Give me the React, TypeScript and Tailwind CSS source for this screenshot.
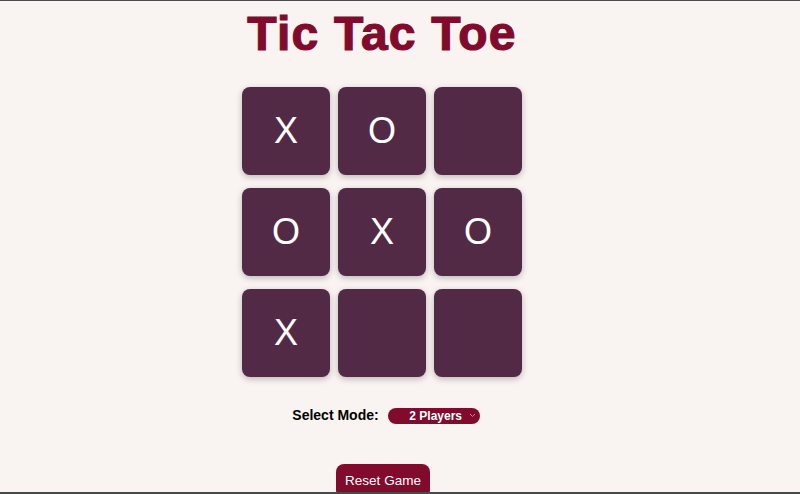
import React from "react";

const board = ["X", "O", "", "O", "X", "O", "X", "", ""];

export default function App() {
  return (
    <div
      className="h-[494px] w-[800px] overflow-hidden bg-[#f9f4f2] border-t border-b-2 border-[#4a4a4a] box-border"
      style={{ fontFamily: '"Liberation Sans", Arial, sans-serif' }}
    >
      <div className="w-[764px] flex flex-col items-center">
        <h1 className="mt-[9px] text-[48px] leading-[48px] font-bold tracking-[1.2px] text-[#810b2c] [-webkit-text-stroke:1.2px_#810b2c]">
          Tic Tac Toe
        </h1>
        <div className="mt-[29px] grid grid-cols-[88px_88px_88px] gap-x-2 gap-y-[13px]">
          {board.map((v, i) => (
            <div
              key={i}
              className="w-[88px] h-[88px] rounded-lg bg-[#532a45] shadow-[0_2px_6px_rgba(0,0,0,0.25)] flex items-center justify-center text-white text-[36px]"
            >
              {v}
            </div>
          ))}
        </div>
        <div className="mt-[28px] flex items-center gap-[9px] ml-[8px]">
          <span className="text-[14px] font-bold text-black">Select Mode:</span>
          <div className="w-[92px] h-[16px] rounded-full bg-[#810b2c] flex items-center justify-center relative text-white text-[12px] font-bold">
            <span className="ml-[4px]">2 Players</span>
            <svg
              className="absolute right-[4px] top-[5px]"
              width="7"
              height="5"
              viewBox="0 0 7 5"
              fill="none"
              stroke="#c98a9a"
              strokeWidth="1"
            >
              <path d="M1 1l2.5 2.5L6 1" />
            </svg>
          </div>
        </div>
        <button className="mt-[38px] ml-[2px] h-[34px] px-[9px] rounded-lg bg-[#810b2c] text-white text-[13.5px]">
          Reset Game
        </button>
      </div>
    </div>
  );
}
